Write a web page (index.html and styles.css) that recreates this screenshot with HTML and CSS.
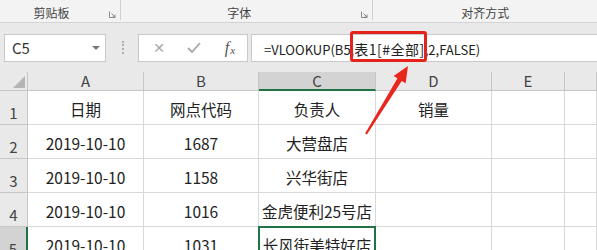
FILE: index.html
```html
<!DOCTYPE html>
<html lang="zh-CN">
<head>
<meta charset="utf-8">
<title>Excel</title>
<link rel="stylesheet" href="styles.css">
</head>
<body>
<div class="app">
  <div class="ribbon">
    <div class="group g1"><span class="glabel">剪贴板</span>
      <svg class="launcher" width="7" height="7" viewBox="0 0 7 7"><path d="M0.5 0.5V6.5H6.5" fill="none" stroke="#8a8a8a" stroke-width="1"/><path d="M2.5 2.5L6 6M6 3.5V6H3.5" fill="none" stroke="#8a8a8a" stroke-width="1"/></svg>
    </div>
    <div class="group g2"><span class="glabel">字体</span>
      <svg class="launcher" width="7" height="7" viewBox="0 0 7 7"><path d="M0.5 0.5V6.5H6.5" fill="none" stroke="#8a8a8a" stroke-width="1"/><path d="M2.5 2.5L6 6M6 3.5V6H3.5" fill="none" stroke="#8a8a8a" stroke-width="1"/></svg>
    </div>
    <div class="group g3"><span class="glabel">对齐方式</span></div>
  </div>

  <div class="fbar">
    <div class="namebox"><span class="nb-text">C5</span><span class="nb-arrow"></span></div>
    <div class="fsep"></div>
    <div class="fbuttons">
      <span class="fbtn x">✕</span>
      <span class="fbtn check"><svg width="14" height="11" viewBox="0 0 14 11"><path d="M1 6L5 10L13 1" fill="none" stroke="#a8a8a8" stroke-width="1.8"/></svg></span>
      <span class="fbtn fx"><i>f</i><i class="sub">x</i></span>
    </div>
    <div class="fbox">
      <span class="ftext"><span class="f-lat">=VLOOKUP(B5,</span><span class="f-cjk">表1[#全部]</span><span class="f-lat">,2,FALSE)</span></span>
      <span class="redbox"></span>
    </div>
  </div>

  <div class="grid">
    <div class="hd corner"><span class="tri"></span></div>
    <div class="hd col">A</div>
    <div class="hd col">B</div>
    <div class="hd col sel-col">C</div>
    <div class="hd col">D</div>
    <div class="hd col">E</div>
    <div class="hd col"></div>

    <div class="hd rowh">1</div>
    <div class="cell">日期</div>
    <div class="cell">网点代码</div>
    <div class="cell">负责人</div>
    <div class="cell">销量</div>
    <div class="cell"></div>
    <div class="cell"></div>

    <div class="hd rowh">2</div>
    <div class="cell">2019-10-10</div>
    <div class="cell">1687</div>
    <div class="cell">大营盘店</div>
    <div class="cell"></div>
    <div class="cell"></div>
    <div class="cell"></div>

    <div class="hd rowh">3</div>
    <div class="cell">2019-10-10</div>
    <div class="cell">1158</div>
    <div class="cell">兴华街店</div>
    <div class="cell"></div>
    <div class="cell"></div>
    <div class="cell"></div>

    <div class="hd rowh">4</div>
    <div class="cell">2019-10-10</div>
    <div class="cell">1016</div>
    <div class="cell">金虎便利25号店</div>
    <div class="cell"></div>
    <div class="cell"></div>
    <div class="cell"></div>

    <div class="hd rowh sel-row">5</div>
    <div class="cell">2019-10-10</div>
    <div class="cell">1031</div>
    <div class="cell active">长风街美特好店</div>
    <div class="cell"></div>
    <div class="cell"></div>
    <div class="cell"></div>
  </div>

  <svg class="arrow" width="597" height="250" viewBox="0 0 597 250">
    <polygon points="408,66 405.6,83.3 401.7,80.9 366.9,134.6 365.1,133.4 397.5,78.3 393.6,75.9" fill="#e8261e"/>
  </svg>
</div>
</body>
</html>
```

FILE: styles.css
```css
* { box-sizing: border-box; }
html, body { margin: 0; padding: 0; }
body {
  width: 597px;
  height: 250px;
  overflow: hidden;
  background: #ffffff;
  font-family: "Noto Sans CJK SC", "Liberation Sans", sans-serif;
  color: #222;
}
.app { position: relative; width: 597px; height: 250px; overflow: hidden; }

/* ribbon group labels */
.ribbon {
  display: flex;
  height: 23px;
  background: #f3f3f3;
  border-bottom: 1px solid #d4d4d4;
}
.group {
  position: relative;
  display: flex;
  justify-content: center;
  align-items: flex-start;
  padding-top: 4px;
  font-size: 12px;
  line-height: 17px;
  color: #444;
}
.g1 { width: 123px; padding-right: 18px; }
.g2 { width: 257px; padding-right: 16px; }
.g3 { width: 228px; }
.g1::after, .g2::after {
  content: "";
  position: absolute;
  right: 0;
  top: 0;
  height: 20px;
  border-right: 1px solid #cfcfcf;
}
.launcher { position: absolute; right: 5px; top: 11px; }

/* formula bar */
.fbar {
  display: flex;
  align-items: center;
  height: 49px;
  background: #e9e9e9;
  padding: 0 0 0 4px;
}
.namebox {
  width: 102px;
  height: 28px;
  background: #fff;
  border: 1px solid #c8c8c8;
  display: flex;
  align-items: center;
  justify-content: space-between;
  padding: 0 5px 0 7px;
}
.nb-text { font-size: 15px; color: #333; }
.nb-arrow {
  width: 0; height: 0;
  border-left: 4px solid transparent;
  border-right: 4px solid transparent;
  border-top: 4px solid #7a7a7a;
}
.fsep {
  width: 0;
  height: 13px;
  margin: 0 14px 0 16px;
  border-left: 2px dotted #b0b0b0;
}
.fbuttons {
  width: 110px;
  height: 28px;
  background: #fff;
  border: 1px solid #c8c8c8;
  display: flex;
  align-items: center;
  padding-left: 12px;
}
.fbtn { display: flex; align-items: center; justify-content: center; }
.fbtn.x { width: 16px; font-size: 14px; color: #a8a8a8; font-family: "DejaVu Sans", sans-serif; }
.fbtn.check { width: 14px; margin-left: 20px; }
.fbtn.fx {
  width: 14px;
  margin-left: 22px;
  font-family: "Liberation Serif", serif;
  font-size: 16px;
  color: #555;
}
.fbtn.fx .sub { font-size: 11px; margin-left: 1px; margin-top: 4px; }
.fbox {
  position: relative;
  flex: 1;
  height: 28px;
  margin-left: 3px;
  background: #fff;
  border: 1px solid #c8c8c8;
  border-right: none;
  display: flex;
  align-items: center;
  padding-left: 12px;
  white-space: nowrap;
  color: #222;
}
.f-lat { font-size: 13px; }
.f-cjk { font-size: 14px; letter-spacing: 0.5px; }
.redbox {
  position: absolute;
  left: 98px;
  top: -4px;
  width: 77px;
  height: 31px;
  border: 3px solid #e3231c;
  border-radius: 3px;
}

/* spreadsheet grid */
.grid {
  display: grid;
  grid-template-columns: 28px 116px 115px 117px 116px 73px 1fr;
  grid-template-rows: 19px repeat(5, 34px);
}
.hd {
  background: #e9e9e9;
  border-right: 1px solid #c6c6c6;
  border-bottom: 1px solid #c6c6c6;
  color: #444;
  font-size: 15px;
  display: flex;
  justify-content: center;
}
.col { align-items: center; line-height: 18px; }
.corner { position: relative; }
.tri {
  position: absolute;
  right: 2px;
  bottom: 2px;
  width: 0; height: 0;
  border-left: 12px solid transparent;
  border-bottom: 12px solid #b5b5b5;
}
.rowh { align-items: flex-end; padding-bottom: 1px; line-height: 20px; }
.sel-col { background: #d3d3d3; border-bottom: 2px solid #217346; }
.sel-row { background: #d3d3d3; border-right: 2px solid #217346; }
.cell {
  position: relative;
  border-right: 1px solid #d9d9d9;
  border-bottom: 1px solid #d9d9d9;
  display: flex;
  align-items: center;
  justify-content: center;
  padding-top: 2px;
  font-size: 15.5px;
  color: #222;
  white-space: nowrap;
}
.active::after {
  content: "";
  position: absolute;
  left: -1px;
  top: -1px;
  right: -1px;
  height: 36px;
  border: 2px solid #217346;
}
.arrow { position: absolute; left: 0; top: 0; pointer-events: none; }
```
